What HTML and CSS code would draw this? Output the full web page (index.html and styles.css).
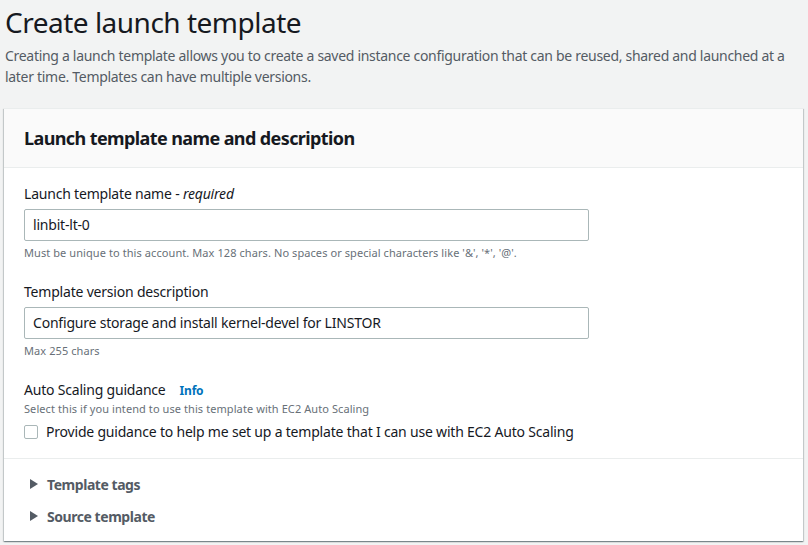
FILE: index.html
```html
<!DOCTYPE html>
<html>
<head>
<meta charset="utf-8">
<link rel="stylesheet" href="styles.css">
</head>
<body>
<div class="page">
  <header class="page-head">
    <h1 class="title">Create launch template</h1>
    <p class="intro">Creating a launch template allows you to create a saved instance configuration that can be reused, shared and launched at a later time. Templates can have multiple versions.</p>
  </header>
  <section class="card">
    <div class="card-head">
      <h2 class="card-title">Launch template name and description</h2>
    </div>
    <div class="card-body">
      <div class="field">
        <label class="label">Launch template name - <i>required</i></label>
        <div class="input">linbit-lt-0</div>
        <div class="hint">Must be unique to this account. Max 128 chars. No spaces or special characters like '&amp;', '*', '@'.</div>
      </div>
      <div class="field">
        <label class="label">Template version description</label>
        <div class="input">Configure storage and install kernel-devel for LINSTOR</div>
        <div class="hint">Max 255 chars</div>
      </div>
      <div class="field last">
        <div class="label-row"><span class="label">Auto Scaling guidance</span><span class="info">Info</span></div>
        <div class="hint top">Select this if you intend to use this template with EC2 Auto Scaling</div>
        <div class="check-row"><span class="checkbox"></span><span class="check-label">Provide guidance to help me set up a template that I can use with EC2 Auto Scaling</span></div>
      </div>
    </div>
    <div class="card-foot">
      <div class="expander"><span class="caret"></span>Template tags</div>
      <div class="expander"><span class="caret"></span>Source template</div>
    </div>
  </section>
</div>
</body>
</html>
```
FILE: styles.css
```css
* { box-sizing: border-box; }
html, body { margin: 0; padding: 0; }
body {
  background: #f2f3f3;
  font-family: "Noto Sans", "Open Sans", sans-serif;
  color: #16191f;
  width: 808px;
  height: 545px;
  overflow: hidden;
  letter-spacing: -0.2px;
}
.page { padding: 0 5px 0 4px; }
.page-head { padding: 0 0 0 1px; }
.title {
  margin: 0;
  padding-top: 3px;
  font-size: 28px;
  font-weight: 400;
  line-height: 38px;
  letter-spacing: -0.5px;
  color: #16191f;
}
.intro {
  margin: 4px 0 0;
  font-size: 14px;
  line-height: 21px;
  letter-spacing: -0.3px;
  color: #545b64;
}
.card {
  margin-top: 21px;
  background: #fff;
  border-top: 1px solid #eaeded;
  box-shadow: 0 1px 1px 0 rgba(0,28,36,.3), 1px 1px 1px 0 rgba(0,28,36,.15), -1px 1px 1px 0 rgba(0,28,36,.15);
}
.card-head {
  background: #fafafa;
  border-bottom: 1px solid #eaeded;
  height: 59px;
  display: flex;
  align-items: center;
  padding: 0 20px;
}
.card-title {
  margin: 0;
  font-size: 18px;
  font-weight: 700;
  line-height: 22px;
  letter-spacing: -0.6px;
}
.card-body {
  padding: 16px 20px 16px;
  border-bottom: 1px solid #eaeded;
}
.field { margin-bottom: 21px; }
.field.last { margin-bottom: 0; }
.label {
  display: block;
  font-size: 14px;
  line-height: 20px;
  color: #16191f;
}
.label i { font-style: italic; }
.input {
  margin-top: 5px;
  width: 565px;
  height: 32px;
  border: 1px solid #aab7b8;
  border-radius: 2px;
  padding: 0 8px;
  font-size: 14px;
  line-height: 30px;
  color: #16191f;
}
.hint {
  margin-top: 4px;
  font-size: 11px;
  line-height: 16px;
  letter-spacing: 0.08px;
  color: #687078;
}
.hint.top { margin-top: 1px; }
.label-row { display: flex; align-items: baseline; }
.info {
  margin-left: 14px;
  font-size: 12px;
  font-weight: 700;
  color: #0073bb;
}
.check-row {
  display: flex;
  align-items: center;
  margin-top: 5px;
}
.checkbox {
  width: 14px;
  height: 14px;
  border: 1px solid #aab7b8;
  border-radius: 2px;
  margin-right: 8px;
  background: #fff;
}
.check-label {
  font-size: 14px;
  line-height: 20px;
}
.card-foot { padding: 9px 20px 9px; }
.expander {
  display: flex;
  align-items: center;
  height: 32px;
  font-size: 14px;
  font-weight: 700;
  letter-spacing: -0.45px;
  color: #545b64;
}
.caret {
  width: 0;
  height: 0;
  border-left: 8px solid #545b64;
  border-top: 5px solid transparent;
  border-bottom: 5px solid transparent;
  margin: 0 9px 0 6px;
}
```
